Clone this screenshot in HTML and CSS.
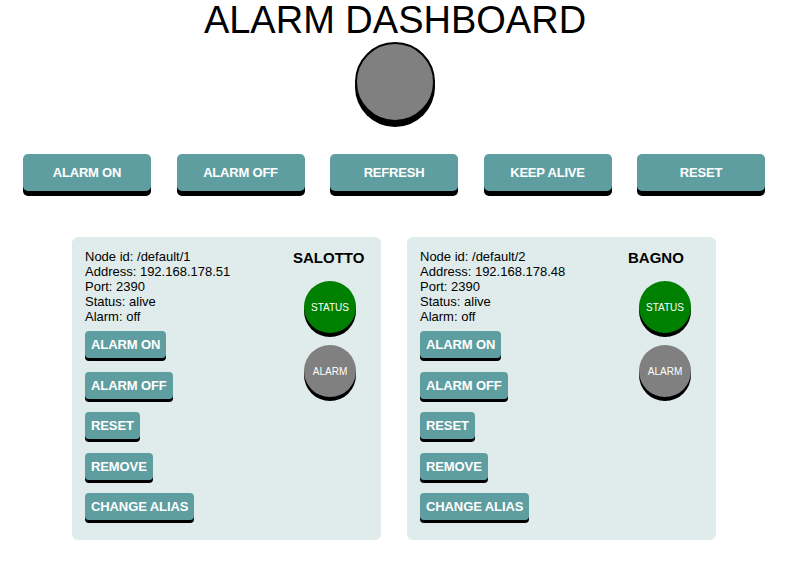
FILE: index.html
```html
<!DOCTYPE html>
<html>
<head>
<meta charset="utf-8">
<title>Alarm Dashboard</title>
<link rel="stylesheet" href="styles.css">
</head>
<body>
<h1 class="title">ALARM DASHBOARD</h1>
<div class="main-led"></div>
<div class="controls">
  <button class="ctl-btn">ALARM ON</button>
  <button class="ctl-btn">ALARM OFF</button>
  <button class="ctl-btn">REFRESH</button>
  <button class="ctl-btn">KEEP ALIVE</button>
  <button class="ctl-btn">RESET</button>
</div>
<div class="cards">
  <div class="card">
    <div class="card-left">
      <div class="info">
        <div>Node id: /default/1</div>
        <div>Address: 192.168.178.51</div>
        <div>Port: 2390</div>
        <div>Status: alive</div>
        <div>Alarm: off</div>
      </div>
      <div class="actions">
        <button class="node-btn">ALARM ON</button>
        <button class="node-btn">ALARM OFF</button>
        <button class="node-btn">RESET</button>
        <button class="node-btn">REMOVE</button>
        <button class="node-btn">CHANGE ALIAS</button>
      </div>
    </div>
    <div class="card-right">
      <div class="alias">SALOTTO</div>
      <div class="led led-status">STATUS</div>
      <div class="led led-alarm">ALARM</div>
    </div>
  </div>
  <div class="card">
    <div class="card-left">
      <div class="info">
        <div>Node id: /default/2</div>
        <div>Address: 192.168.178.48</div>
        <div>Port: 2390</div>
        <div>Status: alive</div>
        <div>Alarm: off</div>
      </div>
      <div class="actions">
        <button class="node-btn">ALARM ON</button>
        <button class="node-btn">ALARM OFF</button>
        <button class="node-btn">RESET</button>
        <button class="node-btn">REMOVE</button>
        <button class="node-btn">CHANGE ALIAS</button>
      </div>
    </div>
    <div class="card-right">
      <div class="alias">BAGNO</div>
      <div class="led led-status">STATUS</div>
      <div class="led led-alarm">ALARM</div>
    </div>
  </div>
</div>
</body>
</html>
```
FILE: styles.css
```css
* { box-sizing: border-box; }
body {
  margin: 0;
  font-family: "Liberation Sans", Arial, sans-serif;
  color: #000;
  background: #fff;
}
.title {
  margin: 0;
  text-align: center;
  font-size: 38px;
  line-height: 41px;
  font-weight: normal;
}
.main-led {
  width: 80px;
  height: 80px;
  margin: 1px auto 0;
  border-radius: 50%;
  background: #808080;
  border: 2px solid #000;
  box-shadow: 0 5px 0 #000;
}
.controls {
  display: flex;
  justify-content: center;
  gap: 25.5px;
  margin-top: 32px;
  padding-right: 2px;
}
.ctl-btn {
  width: 128px;
  height: 37px;
  border: none;
  border-radius: 5px;
  background: #5f9ea0;
  color: #fff;
  font-family: "Liberation Sans", Arial, sans-serif;
  font-weight: bold;
  font-size: 13px;
  letter-spacing: -0.2px;
  box-shadow: 0 5px 0 #000;
  padding: 0;
}
.cards {
  display: flex;
  justify-content: center;
  gap: 26px;
  margin-top: 46px;
  padding-right: 2px;
}
.card {
  width: 309px;
  display: flex;
  background: #dfeceb;
  border-radius: 6px;
  padding: 12px 14px 20px 13px;
}
.card-left {
  width: 208px;
}
.info {
  font-size: 13px;
  line-height: 15px;
}
.actions {
  display: flex;
  flex-direction: column;
  align-items: flex-start;
  gap: 13.5px;
  margin-top: 7px;
}
.node-btn {
  height: 27px;
  padding: 0 6px;
  border: none;
  border-radius: 4px;
  background: #5f9ea0;
  color: #fff;
  font-family: "Liberation Sans", Arial, sans-serif;
  font-weight: bold;
  font-size: 13px;
  letter-spacing: -0.1px;
  box-shadow: 0 3px 0 #000;
}
.card-right {
  width: 74px;
  display: flex;
  flex-direction: column;
  align-items: center;
}
.alias {
  align-self: flex-start;
  font-weight: bold;
  font-size: 15px;
  line-height: 17px;
}
.led {
  width: 52px;
  height: 52px;
  border-radius: 50%;
  color: #fff;
  font-size: 10px;
  display: flex;
  align-items: center;
  justify-content: center;
  box-shadow: 0 4px 0 #000;
}
.led-status {
  background: #008000;
  margin-top: 15px;
}
.led-alarm {
  background: #808080;
  margin-top: 12px;
}
```
